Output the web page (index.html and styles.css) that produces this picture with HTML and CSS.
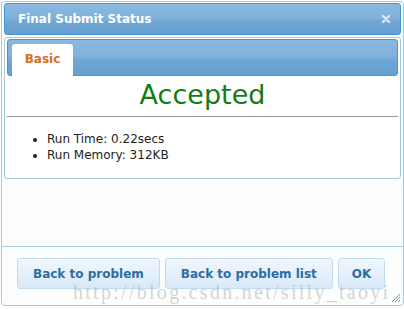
FILE: index.html
```
<html>
    <head>
        <title>Final Submit Status</title>
        <link rel="stylesheet" href="styles.css">
    </head>
    <body>
        <div class="dialog">
            <div class="titlebar">
                <span class="title">Final Submit Status</span>
                <span class="close">
                    <svg width="10" height="10" viewBox="0 0 10 10">
                        <path d="M2 2 L8 8 M8 2 L2 8" stroke="#dde8f2" stroke-width="2.4" stroke-linecap="round"/>
                    </svg>
                </span>
            </div>

            <div class="tabs">
                <ul class="tab-nav">
                    <li class="active">Basic</li>
                </ul>
                <div class="tab-panel">
                    <h1 class="verdict">Accepted</h1>
                    <hr>
                    <ul class="stats">
                        <li>Run Time: 0.22secs</li>
                        <li>Run Memory: 312KB</li>
                    </ul>
                </div>
            </div>

            <div class="buttonpane">
                <button>Back to problem</button>
                <button>Back to problem list</button>
                <button class="ok">OK</button>
            </div>

            <!-- watermark and resize grip sit over the button pane -->
            <div class="watermark">http://blog.csdn.net/silly_taoyi</div>
            <svg class="grip" width="10" height="10" viewBox="0 0 10 10">
                <path d="M9 1 L1 9 M9 4 L4 9 M9 7 L7 9" stroke="#6f8ea8" stroke-width="1"/>
            </svg>
        </div>
    </body>
</html>
```

FILE: styles.css
```
body {
    margin: 0;
    background: #fff;
    font-family: "DejaVu Sans", Verdana, sans-serif;
}

.dialog {
    position: relative;
    margin: 1px 0 0 1px;
    width: 397px;
    height: 301px;
    border: 1px solid #a6c9e2;
    border-radius: 4px;
    padding: 1px 2px;
    background: #fcfdfd;
    display: flex;
    flex-direction: column;
}

.titlebar {
    height: 30px;
    border: 1px solid #4297d7;
    border-radius: 3px;
    background: linear-gradient(to bottom, #8ab8de 0%, #80b2dc 45%, #6ea6d4 60%, #66a0d0 100%);
    display: flex;
    align-items: center;
    justify-content: space-between;
    padding: 0 9px 0 13px;
}

.title {
    color: #fff;
    font-weight: bold;
    font-size: 12px;
}

.close {
    display: flex;
}

.tabs {
    margin-top: 2px;
    height: 138px;
    border: 1px solid #a6c9e2;
    border-radius: 3px;
    background: #fff;
    padding: 1px 2px;
}

.tab-nav {
    margin: 0;
    padding: 4px 0 0 4px;
    list-style: none;
    height: 31px;
    border: 1px solid #4297d7;
    border-radius: 3px;
    background: linear-gradient(to bottom, #8ab8de 0%, #80b2dc 45%, #6ea6d4 60%, #66a0d0 100%);
}

.tab-nav li {
    width: 61px;
    height: 32px;
    box-sizing: border-box;
    padding-top: 8px;
    text-align: center;
    background: #fff;
    border-radius: 3px 3px 0 0;
    color: #d4701f;
    font-weight: bold;
    font-size: 12px;
}

.verdict {
    margin: 3px 0 0 0;
    text-align: center;
    color: #127d12;
    font-weight: normal;
    font-size: 27px;
    line-height: 32px;
}

.tab-panel hr {
    margin: 5px 0 0 0;
    border: 0;
    border-top: 1px solid #999;
}

.stats {
    margin: 14px 0 0 0;
    padding-left: 40px;
    font-size: 12px;
    line-height: 16px;
    color: #222;
}

.buttonpane {
    box-sizing: border-box;
    margin: auto -2px 0 -2px;
    height: 58px;
    border-top: 1px solid #a6c9e2;
    display: flex;
    align-items: flex-start;
    gap: 5px;
    padding: 11px 0 0 15px;
}

.buttonpane button {
    height: 31px;
    padding: 0 15px;
    border: 1px solid #c5dbec;
    border-radius: 3px;
    background: linear-gradient(to bottom, #f0f7fd 0%, #e4f0fb 50%, #d8e9f8 100%);
    color: #2e6e9e;
    font-family: "DejaVu Sans", Verdana, sans-serif;
    font-weight: bold;
    font-size: 12px;
}

.buttonpane button.ok {
    padding: 0 13px;
}

.watermark {
    position: absolute;
    left: 71px;
    top: 279px;
    font-family: "Liberation Serif", serif;
    font-size: 20px;
    letter-spacing: 2.28px;
    color: rgba(170, 170, 170, 0.5);
}

.grip {
    position: absolute;
    right: 2px;
    bottom: 2px;
}
```
